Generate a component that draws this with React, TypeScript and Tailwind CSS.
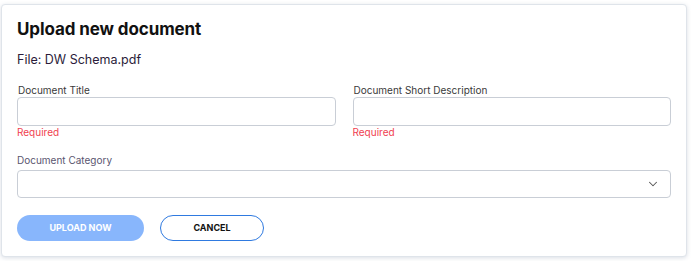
import { ChevronDown } from 'lucide-react'

interface FieldProps {
  label: string
  error?: string
}

const TextField = ({ label, error }: FieldProps) => {
  return (
    <div className="flex flex-col">
      <label className="pl-[1px] text-[10px] leading-[14px] text-[#3a3a3a]">{label}</label>
      <input className="h-[29px] w-full rounded-[4px] border border-[#c9ced6] bg-white px-2 text-[12px] outline-none" />
      {error && <span className="text-[10px] leading-[10px] text-[#f0414f] pt-[1px]">{error}</span>}
    </div>
  )
}

const App = () => {
  return (
    <div className="min-h-[261px] bg-white pl-[1px] pt-[4px] font-['Inter',sans-serif]">
      <div className="w-[686px] rounded-[4px] border border-[#dfe4ea] bg-white px-[15px] pb-[15px] pt-[10px] shadow-[0_1px_4px_rgba(90,110,140,0.22)]">
        <h2 className="text-[17px] font-bold leading-[28px] tracking-[-0.1px] text-[#111]">Upload new document</h2>
        <p className="mt-[8px] text-[12.5px] leading-[18px] text-[#2b1c3a]">File: DW Schema.pdf</p>

        <div className="mt-[14px] grid grid-cols-2 gap-x-[17px]">
          <TextField label="Document Title" error="Required" />
          <TextField label="Document Short Description" error="Required" />
        </div>

        <div className="mt-[16px] flex flex-col">
          <label className="mb-[3px] text-[10px] leading-[14px] text-[#5a5670]">Document Category</label>
          <div className="flex h-[28px] items-center justify-end rounded-[4px] border border-[#c9ced6] pr-[10px]">
            <ChevronDown className="h-[14px] w-[14px] text-[#555]" strokeWidth={1.8} />
          </div>
        </div>

        <div className="mt-[17px] flex gap-[16px]">
          <button className="h-[26px] w-[127px] rounded-full bg-[#88b6fc] text-[9px] font-bold text-white">
            UPLOAD NOW
          </button>
          <button className="h-[26px] w-[104px] rounded-full border border-[#2f7ae0] bg-white text-[9px] font-bold text-[#111]">
            CANCEL
          </button>
        </div>
      </div>
    </div>
  )
}

export default App
